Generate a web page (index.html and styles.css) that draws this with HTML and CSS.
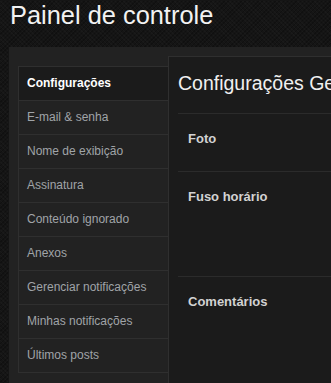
FILE: index.html
```html
<!DOCTYPE html>
<html lang="pt-BR">
<head>
<meta charset="utf-8">
<title>Painel de controle</title>
<link rel="stylesheet" href="styles.css">
</head>
<body>
<h1 class="page-title">Painel de controle</h1>
<div class="panel">
  <ul class="sidebar">
    <li class="nav-item active">Configurações</li>
    <li class="nav-item">E-mail &amp; senha</li>
    <li class="nav-item">Nome de exibição</li>
    <li class="nav-item">Assinatura</li>
    <li class="nav-item">Conteúdo ignorado</li>
    <li class="nav-item">Anexos</li>
    <li class="nav-item">Gerenciar notificações</li>
    <li class="nav-item">Minhas notificações</li>
    <li class="nav-item">Últimos posts</li>
  </ul>
  <main class="content">
    <h2 class="content-title">Configurações Gerais</h2>
    <div class="row row-photo"><span class="row-label">Foto</span></div>
    <div class="row row-timezone"><span class="row-label">Fuso horário</span></div>
    <div class="row row-comments"><span class="row-label">Comentários</span></div>
  </main>
</div>
</body>
</html>
```
FILE: styles.css
```css
html, body {
  margin: 0;
  padding: 0;
}
body {
  width: 331px;
  height: 383px;
  overflow: hidden;
  background-color: #151515;
  background-image:
    repeating-linear-gradient(45deg, rgba(255,255,255,0.018) 0 1px, transparent 1px 3px),
    repeating-linear-gradient(-45deg, rgba(0,0,0,0.25) 0 1px, transparent 1px 3px);
  font-family: "Liberation Sans", Arial, sans-serif;
}
.page-title {
  margin: 0 0 0 10px;
  font-size: 25.4px;
  line-height: 30px;
  font-weight: normal;
  color: #f2f2f2;
  white-space: nowrap;
}
.panel {
  box-sizing: border-box;
  margin: 17px 0 0 9px;
  padding: 9px 0 0 9px;
  background: #222222;
  display: flex;
  align-items: flex-start;
  height: 336px;
  overflow: hidden;
}
.sidebar {
  list-style: none;
  margin: 10px 0 0 0;
  padding: 0;
  width: 149px;
  flex: none;
  border: 1px solid #2f2f2f;
  border-right: none;
  background: #222222;
}
.nav-item {
  height: 33px;
  line-height: 33px;
  padding-left: 8px;
  border-bottom: 1px solid #2f2f2f;
  font-size: 12px;
  color: #a0a4a8;
  white-space: nowrap;
}
.nav-item:last-child {
  border-bottom: none;
}
.nav-item.active {
  background: #1b1b1b;
  color: #ffffff;
  font-weight: bold;
}
.content {
  flex: 1;
  min-width: 0;
  align-self: stretch;
  overflow: hidden;
  background: #1b1b1b;
  border-top: 1px solid #2f2f2f;
  border-left: 1px solid #2f2f2f;
  padding: 14px 0 0 9px;
}
.content-title {
  margin: 0 0 18px 0;
  font-size: 19.5px;
  line-height: 24px;
  font-weight: normal;
  color: #f0f0f0;
  white-space: nowrap;
}
.row {
  box-sizing: border-box;
  border-top: 1px solid #2b2b2b;
  padding: 17px 10px 0;
  font-size: 13px;
  line-height: 16px;
}
.row-photo { height: 58px; }
.row-timezone { height: 105px; }
.row-comments { height: 80px; }
.row-label {
  font-weight: bold;
  color: #d2d2d2;
  white-space: nowrap;
}
```
